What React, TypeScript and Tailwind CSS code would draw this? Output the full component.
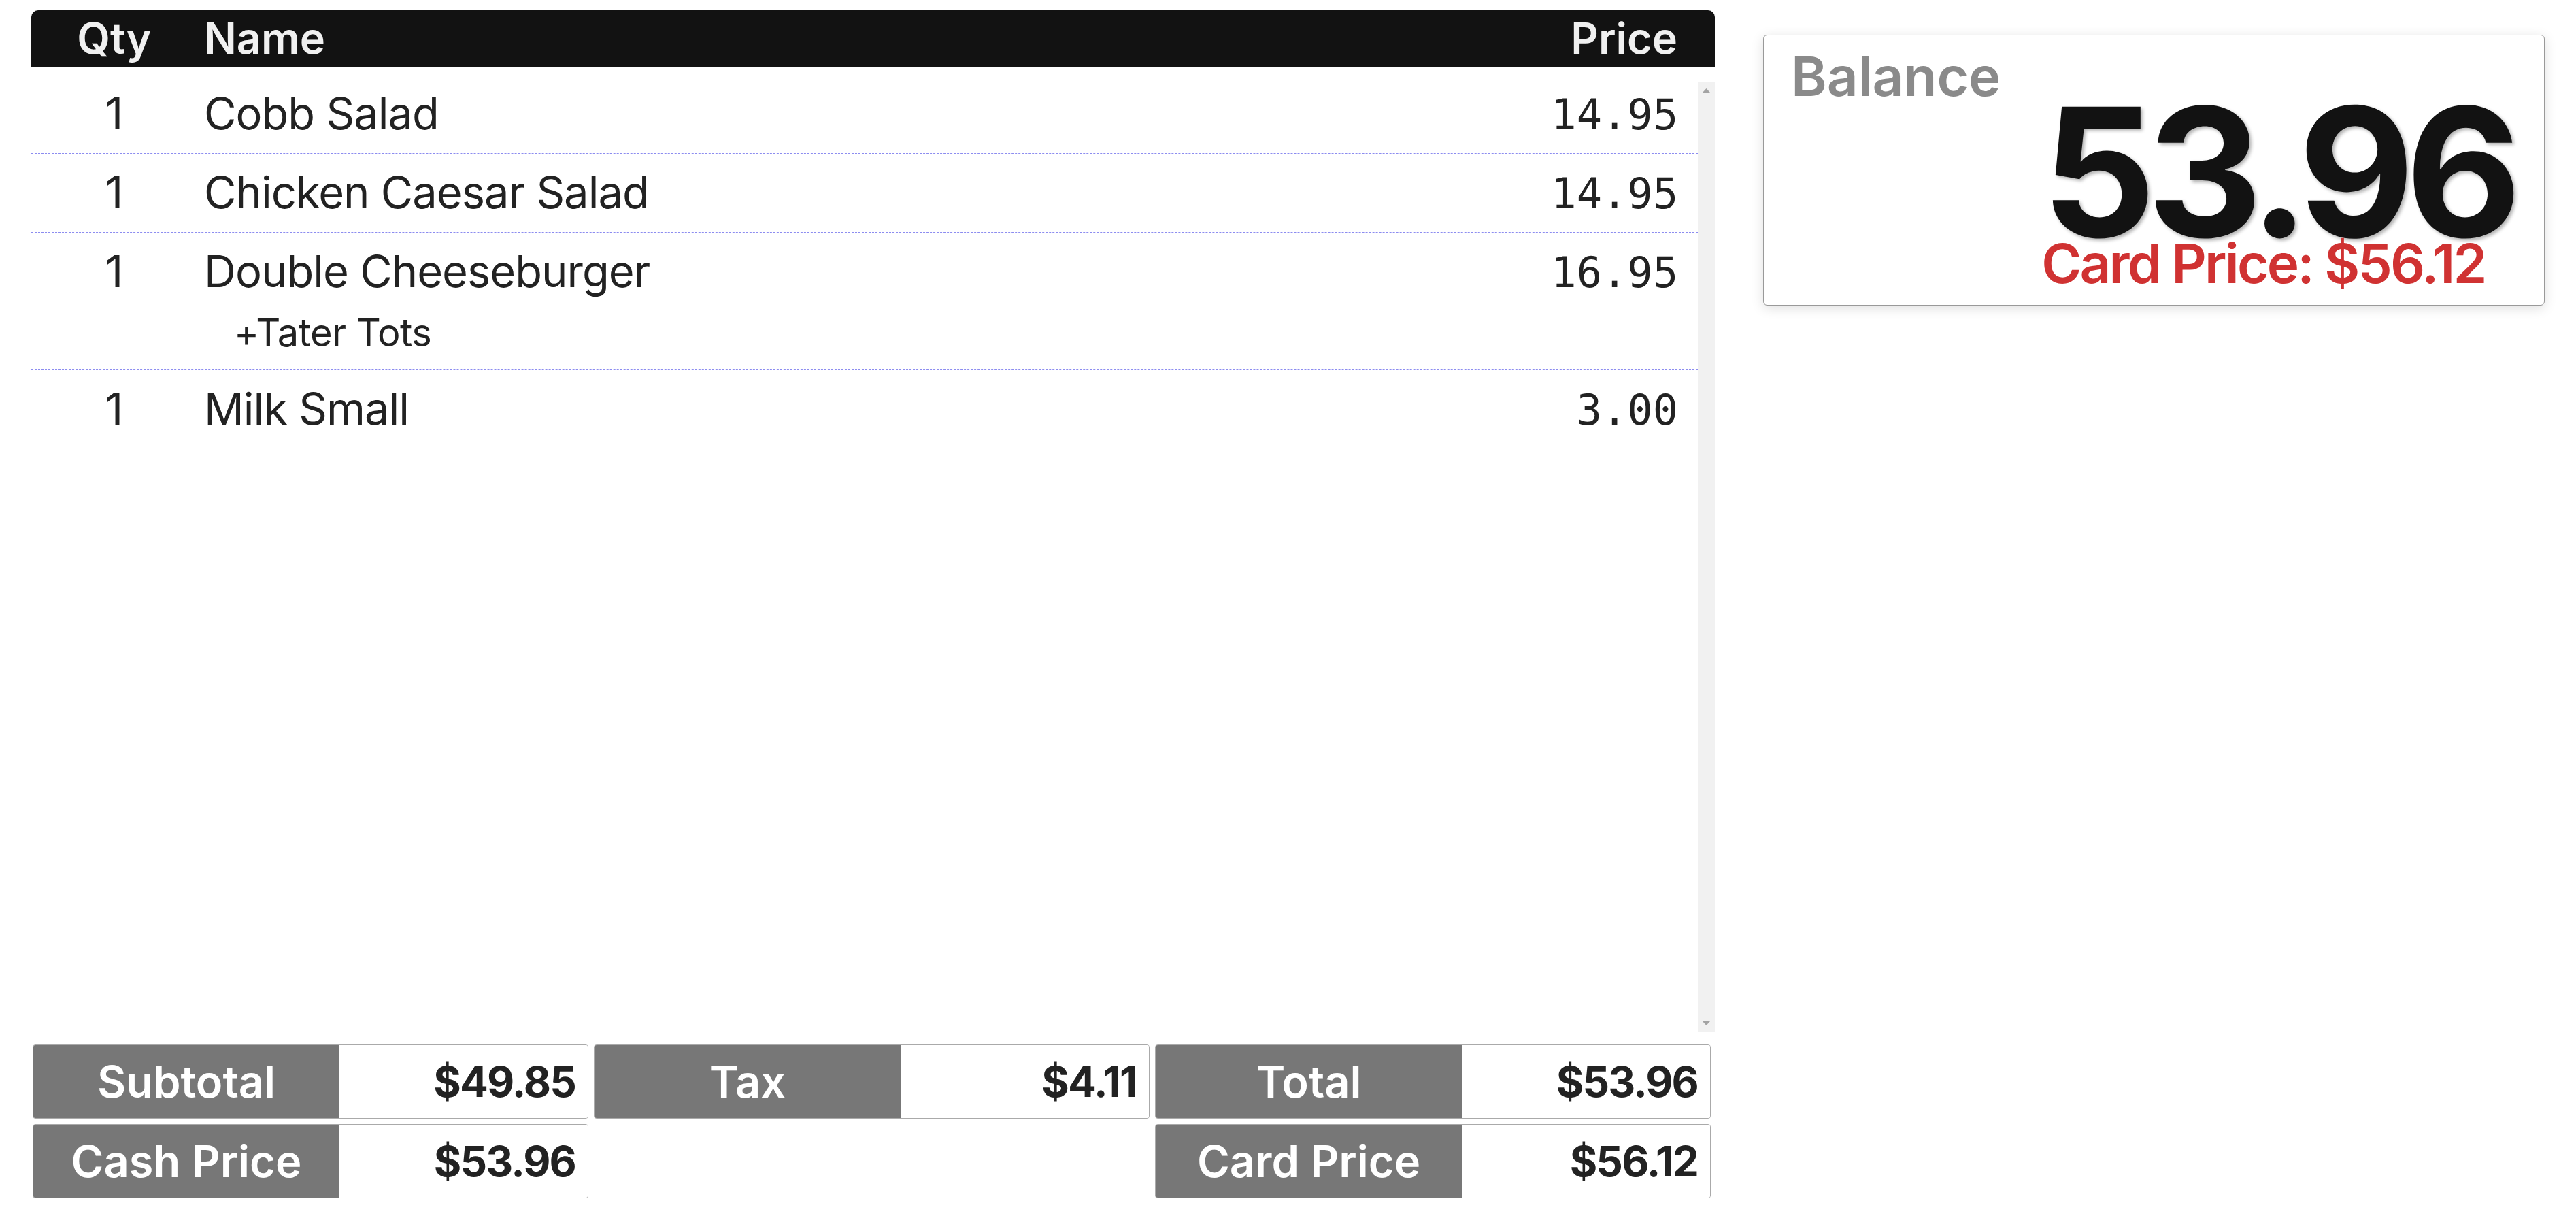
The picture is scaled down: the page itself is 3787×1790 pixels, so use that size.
import { ReactElement } from 'react';

type Item = { qty: number; name: string; price: string; mods?: string[] };

const items: Item[] = [
  { qty: 1, name: 'Cobb Salad', price: '14.95' },
  { qty: 1, name: 'Chicken Caesar Salad', price: '14.95' },
  { qty: 1, name: 'Double Cheeseburger', price: '16.95', mods: ['+Tater Tots'] },
  { qty: 1, name: 'Milk Small', price: '3.00' },
];

function TotalBox({ label, value }: { label: string; value: string }) {
  return (
    <div className="flex h-[109px] w-[817px] overflow-hidden rounded-[4px] border border-[#aaaaaa]">
      <div className="flex w-[450px] items-center justify-center bg-[#777777] text-[65px] font-semibold text-white">
        {label}
      </div>
      <div className="flex flex-1 items-center justify-end bg-white pr-[18px] text-[62px] font-bold tracking-[-0.03em] text-[#222222]">
        {value}
      </div>
    </div>
  );
}

function ScrollTrack() {
  return (
    <div className="mt-[11px] flex w-[25px] flex-col items-center justify-between bg-[#f1f1f1] py-[9px]">
      <svg width="11" height="6" viewBox="0 0 11 6">
        <polygon points="5.5,0 11,6 0,6" fill="#a3a3a3" />
      </svg>
      <svg width="11" height="6" viewBox="0 0 11 6">
        <polygon points="0,0 11,0 5.5,6" fill="#a3a3a3" />
      </svg>
    </div>
  );
}

export default function App(): ReactElement {
  return (
    <div className="flex h-[1790px] w-[3787px] gap-[71px] bg-white pl-[46px] pt-[15px] font-[Inter,sans-serif] text-[#222222]">
      {/* order column */}
      <div className="flex w-[2475px] flex-col">
        <div className="flex h-[83px] items-center rounded-t-[10px] bg-[#121212] pr-[55px] text-[63px] font-semibold text-[#f0f0f0]">
          <div className="w-[244px] text-center">Qty</div>
          <div className="flex-1 pl-[10px]">Name</div>
          <div>Price</div>
        </div>

        <div className="mt-[12px] flex h-[1406px]">
          <div className="flex-1">
            {items.map((it, i) => (
              <div
                key={i}
                className={
                  i < items.length - 1
                    ? 'border-b border-dashed border-[#8c8cf0] pb-[11px] pt-[10px]'
                    : 'pb-[11px] pt-[10px]'
                }
              >
                <div className="flex h-[94px] items-baseline pr-[29px] text-[65px] leading-[94px]">
                  <div className="w-[244px] text-center">{it.qty}</div>
                  <div className="flex-1 pl-[10px] tracking-[-0.015em]">{it.name}</div>
                  <div className="font-['DejaVu_Sans_Mono',monospace] text-[62px]">{it.price}</div>
                </div>
                {it.mods?.map((m) => (
                  <div key={m} className="h-[86px] pl-[298px] text-[56px] leading-[86px] tracking-[-0.01em]">
                    {m}
                  </div>
                ))}
              </div>
            ))}
          </div>
          <ScrollTrack />
        </div>

        <div className="mt-[19px] grid grid-cols-[817px_817px_817px] gap-[8px] pl-[2px]">
          <TotalBox label="Subtotal" value="$49.85" />
          <TotalBox label="Tax" value="$4.11" />
          <TotalBox label="Total" value="$53.96" />
          <TotalBox label="Cash Price" value="$53.96" />
          <div />
          <TotalBox label="Card Price" value="$56.12" />
        </div>
      </div>

      {/* balance card */}
      <div className="mt-[36px] flex h-[398px] w-[1149px] flex-col rounded-[6px] border border-[#999999] bg-white pl-[40px] pr-[46px] pt-[20px] shadow-[0_4px_18px_rgba(0,0,0,0.13)]">
        <div className="text-[80px] font-semibold leading-[80px] text-[#8a8a8a]">Balance</div>
        <div className="-mt-[31px] flex flex-col items-start self-end">
          <div className="text-[263px] font-bold leading-[263px] tracking-[-0.05em] text-[#121212] [text-shadow:3px_3px_5px_rgba(0,0,0,0.3)]">
            53.96
          </div>
          <div className="-mt-[37px] text-[80px] font-semibold leading-[80px] tracking-[-0.035em] text-[#d03232]">
            Card Price: $56.12
          </div>
        </div>
      </div>
    </div>
  );
}
